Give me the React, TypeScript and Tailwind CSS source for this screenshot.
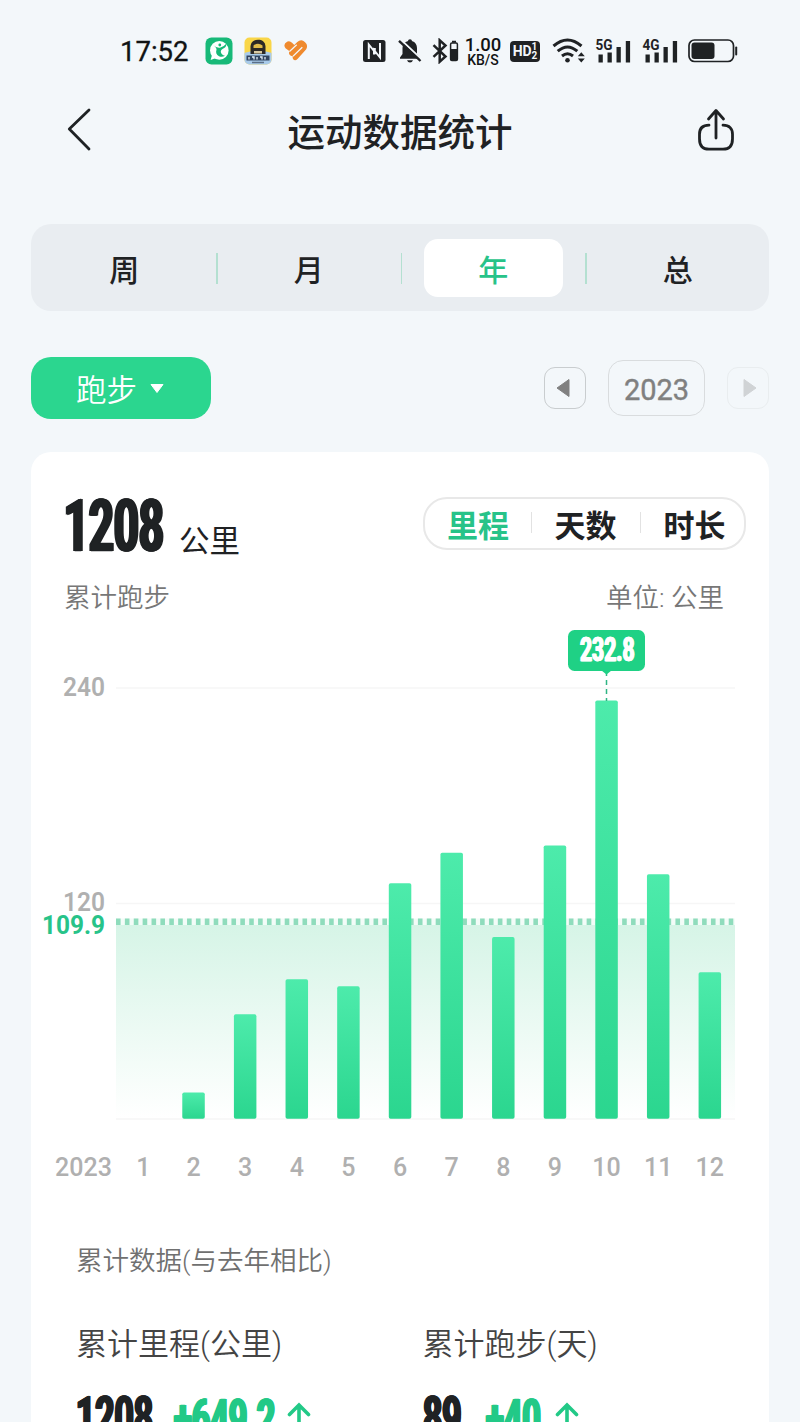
import { clsx } from "clsx";

const PERIODS = ["周", "月", "年", "总"];
const METRICS = ["里程", "天数", "时长"];

const MONTHS = [0, 14.5, 58, 77.6, 73.6, 131, 148, 101, 152, 232.8, 136, 81.4];
const MAX = 240;
const AVERAGE = 109.9;

// plot area inside the 738px wide card
const LEFT = 85;
const RIGHT = 704;
const TOP = 62;
const BASE = 493;
const STEP = 51.63;
const BAR = 22.5;

const yOf = (km: number) => BASE - (km / MAX) * (BASE - TOP);
const xOf = (i: number) => 110.9 + i * STEP;

function StatusBar() {
  return (
    <div className="flex h-[102px] items-center pl-[120px] text-[#111314]">
      <span className="w-[85px] pt-px text-[27.5px] leading-none [-webkit-text-stroke:0.3px_currentColor]">17:52</span>
      <svg width="28" height="28" viewBox="0 0 28 28">
        <rect x="0.5" y="0.5" width="27" height="27" rx="6" fill="#17b978" />
        <circle cx="14.3" cy="13.4" r="9.3" fill="#fff" />
        <path d="M7 18l-1.4 5 5.5-2z" fill="#fff" />
        <path d="M8 8q4 3.500 7.500 2.500t6-4q0 4-4 5.500-3 2-.8 5 1.500 1.500 3.300 1.700-3 2-6 .5-4-2.300-2.500-6.500.3-2-3.500-4.700z" fill="#17b978" />
        <circle cx="14.800" cy="8" r="1.400" fill="#17b978" />
      </svg>
      <svg className="ml-[11px]" width="28" height="28" viewBox="0 0 28 28">
        <defs>
          <clipPath id="app">
            <rect x="0.5" y="0.5" width="27" height="27" rx="5" />
          </clipPath>
        </defs>
        <g clipPath="url(#app)">
          <rect width="28" height="28" fill="#f9d648" />
          <path d="M0 16l6-1.5h16l6 1.5v12H0z" fill="#a9cbea" />
          <path d="M6.500 17V9.500C7 4.500 10 2.800 14 2.800s7 1.700 7.500 6.700V17z" fill="#2c2926" />
          <path d="M9.500 8.500q4.500-3.500 9 0v2.500h-9z" fill="#e0bb4a" />
          <path d="M10 14h8v2.500h-8z" fill="#d8c9a2" />
          <path d="M2.500 18.500h23v5h-23z" fill="#31445f" />
          <path d="M5 20v2.500M8 20h2v2.500M13 20v2.500M16 20h2v2.500M21 20v2.500" stroke="#e4f0fa" strokeWidth="1.300" fill="none" />
          <path d="M8 25.500h12" stroke="#5b6f88" strokeWidth="1.500" />
        </g>
      </svg>
      <svg className="ml-[11px]" width="26" height="24" viewBox="0 0 26 24">
        <path d="M4.500 2.500Q7 1.500 9 3.800L11.300 6 14 3.300Q17.500 0 20.500 2q5.500 3.500 2.500 8.500L14.500 20q-2.500 2.300-4.300.2-1-1.500-.2-3-2.200.3-3.600-1.700-.9-1.500.2-3.200L2.500 9.300Q-.5 5 4.500 2.500z" fill="#ef8a2e" />
        <path d="M6.500 12.500l7.200-6.700M10 17.200l9.300-9" stroke="#f3f7fa" strokeWidth="1.200" />
      </svg>

      <svg className="ml-[54px]" width="23" height="22" viewBox="0 0 23 22">
        <rect width="22.500" height="22" rx="2.500" fill="#1f2224" />
        <path d="M5.800 19V4.500l6 7.500v-4M17 3v14.500l-6-7.500v4.500" fill="none" stroke="#f3f7fa" strokeWidth="2" />
      </svg>
      <svg className="ml-[12px]" width="24" height="26" viewBox="0 0 24 26">
        <path d="M12 1.200c1.200 0 1.900.7 1.900 1.800 3.500 1 5.100 3.700 5.100 7v6l3 3.500v1.300H2v-1.300L4.500 16v-6c0-3.300 2-6 5.600-7 0-1.100.7-1.800 1.900-1.800z" fill="#1f2224" />
        <path d="M9 22.200h6q-.8 2.300-3 2.300t-3-2.300z" fill="#1f2224" />
        <path d="M2.500 1.500L24 21.500" stroke="#f3f7fa" strokeWidth="2" />
        <path d="M1 2.800L22.500 23" stroke="#1f2224" strokeWidth="2.400" />
      </svg>
      <svg className="ml-[10px]" width="27" height="26" viewBox="0 0 27 26">
        <path d="M1.500 7.200l12 11.300-5.800 5.200V2.300l5.800 5.200L1.500 18.800" fill="none" stroke="#1f2224" strokeWidth="2.500" />
        <rect x="18.600" y="5" width="6.800" height="17.500" rx="1.300" fill="none" stroke="#1f2224" strokeWidth="1.500" />
        <path d="M20 2.800h4v2h-4zM18.600 11h6.800v11h-6.800z" fill="#1f2224" />
      </svg>
      <div className="ml-[5px] flex w-[38px] flex-col items-center pt-px font-medium">
        <span className="text-[18.500px] leading-[16px]">1.00</span>
        <span className="text-[14px] leading-[14px]">KB/S</span>
      </div>
      <div className="ml-[8px] flex h-[21px] w-[30px] items-center justify-center rounded-[4px] bg-[#1f2224] text-[#f3f7fa]">
        <span className="text-[14px] font-bold leading-none">HD</span>
        <span className="flex flex-col text-[10px] font-bold leading-[9px]">
          <span>1</span>
          <span>2</span>
        </span>
      </div>
      <svg className="ml-[12px]" width="34" height="26" viewBox="0 0 34 26">
        <g fill="none" stroke="#1f2224" strokeWidth="3">
          <path d="M1.500 8q14-12 28 0" />
          <path d="M5.700 13.200q9.800-8.500 19.600 0" />
          <path d="M10 18q5.500-4.500 11 0" />
        </g>
        <circle cx="15.500" cy="22.300" r="2.300" fill="#1f2224" />
        <path d="M25.800 18.200l3.500-4 3.500 4zM25.800 20.500l3.500 4 3.500-4z" fill="#1f2224" />
      </svg>
      <Signal label="5G" className="ml-[9px]" />
      <Signal label="4G" className="ml-[10px]" />
      <svg className="ml-[9px]" width="50" height="24" viewBox="0 0 50 24">
        <rect x="1" y="1" width="44.500" height="21.500" rx="5.500" fill="none" stroke="#1f2224" strokeWidth="1.700" />
        <rect x="3.500" y="3.500" width="23" height="16.500" rx="3" fill="#1f2224" />
        <path d="M48.200 8.500v7" stroke="#1f2224" strokeWidth="2" strokeLinecap="round" />
      </svg>
    </div>
  );
}

function Signal({ label, className }: { label: string; className: string }) {
  return (
    <svg className={clsx("overflow-visible", className)} width="37" height="26" viewBox="0 0 37 26">
      <text x="0.5" y="11.500" fontSize="15" fontWeight="700" textLength="17" lengthAdjust="spacingAndGlyphs" fill="#1f2224">
        {label}
      </text>
      <path d="M3.500 16.500h4.300v8H3.500zM12.500 14.500h4.300v10h-4.300zM21.500 9h4.300v15.500h-4.300zM30.800 3h4.300v21.500h-4.300z" fill="#1f2224" />
    </svg>
  );
}

function Header() {
  return (
    <header className="flex h-[60px] items-center justify-between px-[66px]">
      <svg className="-mt-[6px]" width="28" height="44" viewBox="0 0 28 44">
        <path d="M23 3L3.300 22 23 42" fill="none" stroke="#1f2224" strokeWidth="2.800" strokeLinecap="round" strokeLinejoin="round" />
      </svg>
      <h1 className="ml-[10px] pt-1 text-[37.500px] font-medium leading-none text-[#1f2224]">运动数据统计</h1>
      <svg className="-mt-[5px] -mr-[2px]" width="40" height="44" viewBox="0 0 40 44">
        <g fill="none" stroke="#1f2224" strokeWidth="2.800" strokeLinecap="round" strokeLinejoin="round">
          <path d="M20 30V3M12.500 11L20 2.500 27.500 11" />
          <path d="M13 17.200c-6.500 0-9.500 3.500-9.500 9v4.500c0 7 3 10.500 9.500 10.500h14c6.500 0 9.500-3.500 9.500-10.500v-4.500c0-5.500-3-9-9.500-9" />
        </g>
      </svg>
    </header>
  );
}

function Stat({ label, value, delta, valueBox, deltaBox }: { label: string; value: string; delta: string; valueBox: string; deltaBox: string }) {
  return (
    <div className="w-[347px]">
      <div className="text-[31px] leading-[40px] font-[350] text-[#444444]">{label}</div>
      <div className="mt-[24px] flex h-[56px] items-start text-[#1f2224]">
        <Condensed className={clsx("text-[56px]", valueBox)}>{value}</Condensed>
        <Condensed className={clsx("mt-[3px] text-[54px] text-[#22c987]", deltaBox)}>{delta}</Condensed>
        <svg className="mt-[13px]" width="24" height="30" viewBox="0 0 24 30">
          <path d="M12 30V3M2.500 12.500L12 3l9.500 9.500" fill="none" stroke="#22c987" strokeWidth="3.600" strokeLinecap="round" />
        </svg>
      </div>
    </div>
  );
}

// narrow display face: squeezed bold with the stems thickened sideways
function Condensed({ children, className }: { children: string; className: string }) {
  return (
    <span className={clsx("block leading-none", className)}>
      <span className="inline-block origin-left scale-x-[0.6] font-bold [-webkit-text-stroke:0.01em_currentColor] [text-shadow:0.038em_0_currentColor,-0.038em_0_currentColor,0.02em_0_currentColor,-0.02em_0_currentColor]">
        {children}
      </span>
    </span>
  );
}

function Chart() {
  const avg = yOf(AVERAGE);
  return (
    <svg className="block" width="738" height="575" viewBox="0 0 738 575">
      <defs>
        <linearGradient id="bar" x1="0" y1="0" x2="0" y2="1">
          <stop offset="0" stopColor="#4debab" />
          <stop offset="1" stopColor="#2bd68f" />
        </linearGradient>
        <linearGradient id="area" x1="0" y1="0" x2="0" y2="1">
          <stop offset="0" stopColor="#d5f4e6" />
          <stop offset="1" stopColor="#ffffff" />
        </linearGradient>
      </defs>

      <rect x={LEFT} y={avg} width={RIGHT - LEFT} height={BASE - avg} fill="url(#area)" />
      {[0, 120, 240].map((v) => (
        <path key={v} d={`M${LEFT} ${yOf(v) + 1}H${RIGHT}`} stroke="#f6f6f6" strokeWidth="1.500" />
      ))}
      <path d={`M${LEFT} ${avg + 1}H${RIGHT}`} stroke="#f3fcf8" strokeWidth="6.500" />
      <path d={`M${LEFT} ${avg + 1}H${RIGHT}`} stroke="#8fdcbc" strokeWidth="6.500" strokeDasharray="4.600 4.280" />

      {MONTHS.map((km, i) =>
        km > 0 ? (
          <rect key={i} x={xOf(i) - BAR / 2} y={yOf(km) + 0.5} width={BAR} height={BASE - yOf(km) + 0.3} rx="1.800" fill="url(#bar)" />
        ) : null,
      )}

      <path d="M575.500 46v30" stroke="#2fb583" strokeWidth="1.500" strokeDasharray="5 4" />
      <rect x="537" y="5" width="77" height="41" rx="6.500" fill="#1fd185" />
      <path d="M570.500 45.500h10l-5 4z" fill="#1fd185" />
      <text
        className="[text-shadow:0.8px_0_#fff,-0.8px_0_#fff]"
        x="549"
        y="36"
        fontSize="33.500"
        fontWeight="700"
        fill="#fff"
        stroke="#fff"
        strokeWidth="0.600"
        textLength="54.500"
        lengthAdjust="spacingAndGlyphs"
      >
        232.8
      </text>

      <g fontSize="25.500" fontWeight="600">
        <text x="32" y="71" fill="#b0b0b0" textLength="42" lengthAdjust="spacingAndGlyphs">240</text>
        <text x="32" y="285.500" fill="#b0b0b0" textLength="42" lengthAdjust="spacingAndGlyphs">120</text>
        <text x="11" y="309" fill="#27c389" fontWeight="700" textLength="63" lengthAdjust="spacingAndGlyphs">109.9</text>
      </g>
      <g fontSize="25" fontWeight="500" fill="#b0b0b0" textAnchor="middle">
        <text x="52.500" y="550.500">2023</text>
        {MONTHS.map((_, i) => (
          <text key={i} x={xOf(i) + (i === 0 ? 1.5 : 0)} y="550.500">
            {i + 1}
          </text>
        ))}
      </g>
    </svg>
  );
}

export default function App() {
  return (
    <div className="h-[1422px] w-[800px] overflow-hidden bg-[#f3f7fa] font-['Roboto','Noto_Sans_CJK_SC',sans-serif]">
      <StatusBar />
      <Header />

      <nav className="mx-[31px] mt-[62px] flex h-[87px] items-center rounded-[20px] bg-[#e9edf1]">
        {PERIODS.map((p, i) => (
          <div key={p} className="relative flex flex-1 justify-center pl-[2px]">
            {i > 0 && <span className="absolute top-[14px] left-[0.500px] h-[31px] w-[1.500px] bg-[#b4e0d1]" />}
            <button
              className={clsx(
                "h-[58px] w-[139px] rounded-[14px] pt-[6px] text-[30px] leading-none font-medium",
                p === "年" ? "bg-white text-[#27c389]" : "text-[#1f2224]",
              )}
            >
              {p}
            </button>
          </div>
        ))}
      </nav>

      <div className="mx-[31px] mt-[46px] flex h-[62px] items-center">
        <button className="flex h-full w-[180px] items-center justify-center gap-[13px] rounded-[20px] bg-[#2bd68f] pr-[2px] text-[30.500px] leading-none text-white">
          <span className="pt-[6px] font-[350]">跑步</span>
          <svg width="14" height="9" viewBox="0 0 14 9">
            <path d="M1 .5h12L7 8.500z" fill="#fff" stroke="#fff" strokeLinejoin="round" />
          </svg>
        </button>
        <button className="ml-auto flex size-[42px] items-center justify-center rounded-[11px] border border-[#c9cdcf] pr-[4px]">
          <svg width="14" height="20" viewBox="0 0 14 20">
            <path d="M13 1.500v17L1 10z" fill="#808080" stroke="#808080" strokeLinejoin="round" />
          </svg>
        </button>
        <span className="mx-[22px] flex h-[56px] w-[97px] items-center justify-center rounded-[15px] border border-[#d9dcde] pt-[5px] text-[29px] leading-none text-[#808080] [-webkit-text-stroke:0.400px_currentColor]">
          2023
        </span>
        <button className="flex size-[42px] items-center justify-center rounded-[11px] border border-[#e9edef] pl-[3px]">
          <svg width="14" height="20" viewBox="0 0 14 20">
            <path d="M1 1.500v17L13 10z" fill="#d0d3d5" stroke="#d0d3d5" strokeLinejoin="round" />
          </svg>
        </button>
      </div>

      <main className="mx-[31px] mt-[33px] h-[1000px] rounded-[20px] bg-white">
        <div className="flex h-[118px] justify-between pt-[39px] pr-[23px] pl-[33px]">
          <div className="flex text-[#1f2224]">
            <Condensed className="w-[115px] text-[72.500px]">1208</Condensed>
            <span className="mt-[35px] text-[30.500px] leading-[32px]">公里</span>
          </div>
          <div className="mt-[6px] flex h-[53px] w-[323px] items-center rounded-[24px] border-2 border-[#e8e8e8]">
            {METRICS.map((m, i) => (
              <div
                key={m}
                className={clsx(
                  "relative shrink-0 pt-[5px] text-center text-[31px] leading-none font-bold",
                  i === 0 ? "w-[106px] text-[#27c389]" : "w-[109px] text-[#1f2224]",
                )}
              >
                {i > 0 && <span className="absolute top-[6px] left-0 h-[21px] w-px bg-[#e2e2e2]" />}
                {m}
              </div>
            ))}
          </div>
        </div>
        <div className="flex h-[55px] items-center justify-between pr-[45px] pl-[33px] text-[26.500px] font-[350] text-[#777777]">
          <span>累计跑步</span>
          <span>单位: 公里</span>
        </div>
        <Chart />
        <div className="pt-[41px] pl-[45px]">
          <div className="text-[26.500px] leading-[40px] font-[350] text-[#707070]">累计数据(与去年相比)</div>
          <div className="mt-[44px] flex">
            <Stat label="累计里程(公里)" value="1208" delta="+649.2" valueBox="w-[98px]" deltaBox="w-[113px]" />
            <Stat label="累计跑步(天)" value="89" delta="+40" valueBox="w-[63px]" deltaBox="w-[69px]" />
          </div>
        </div>
      </main>
    </div>
  );
}
